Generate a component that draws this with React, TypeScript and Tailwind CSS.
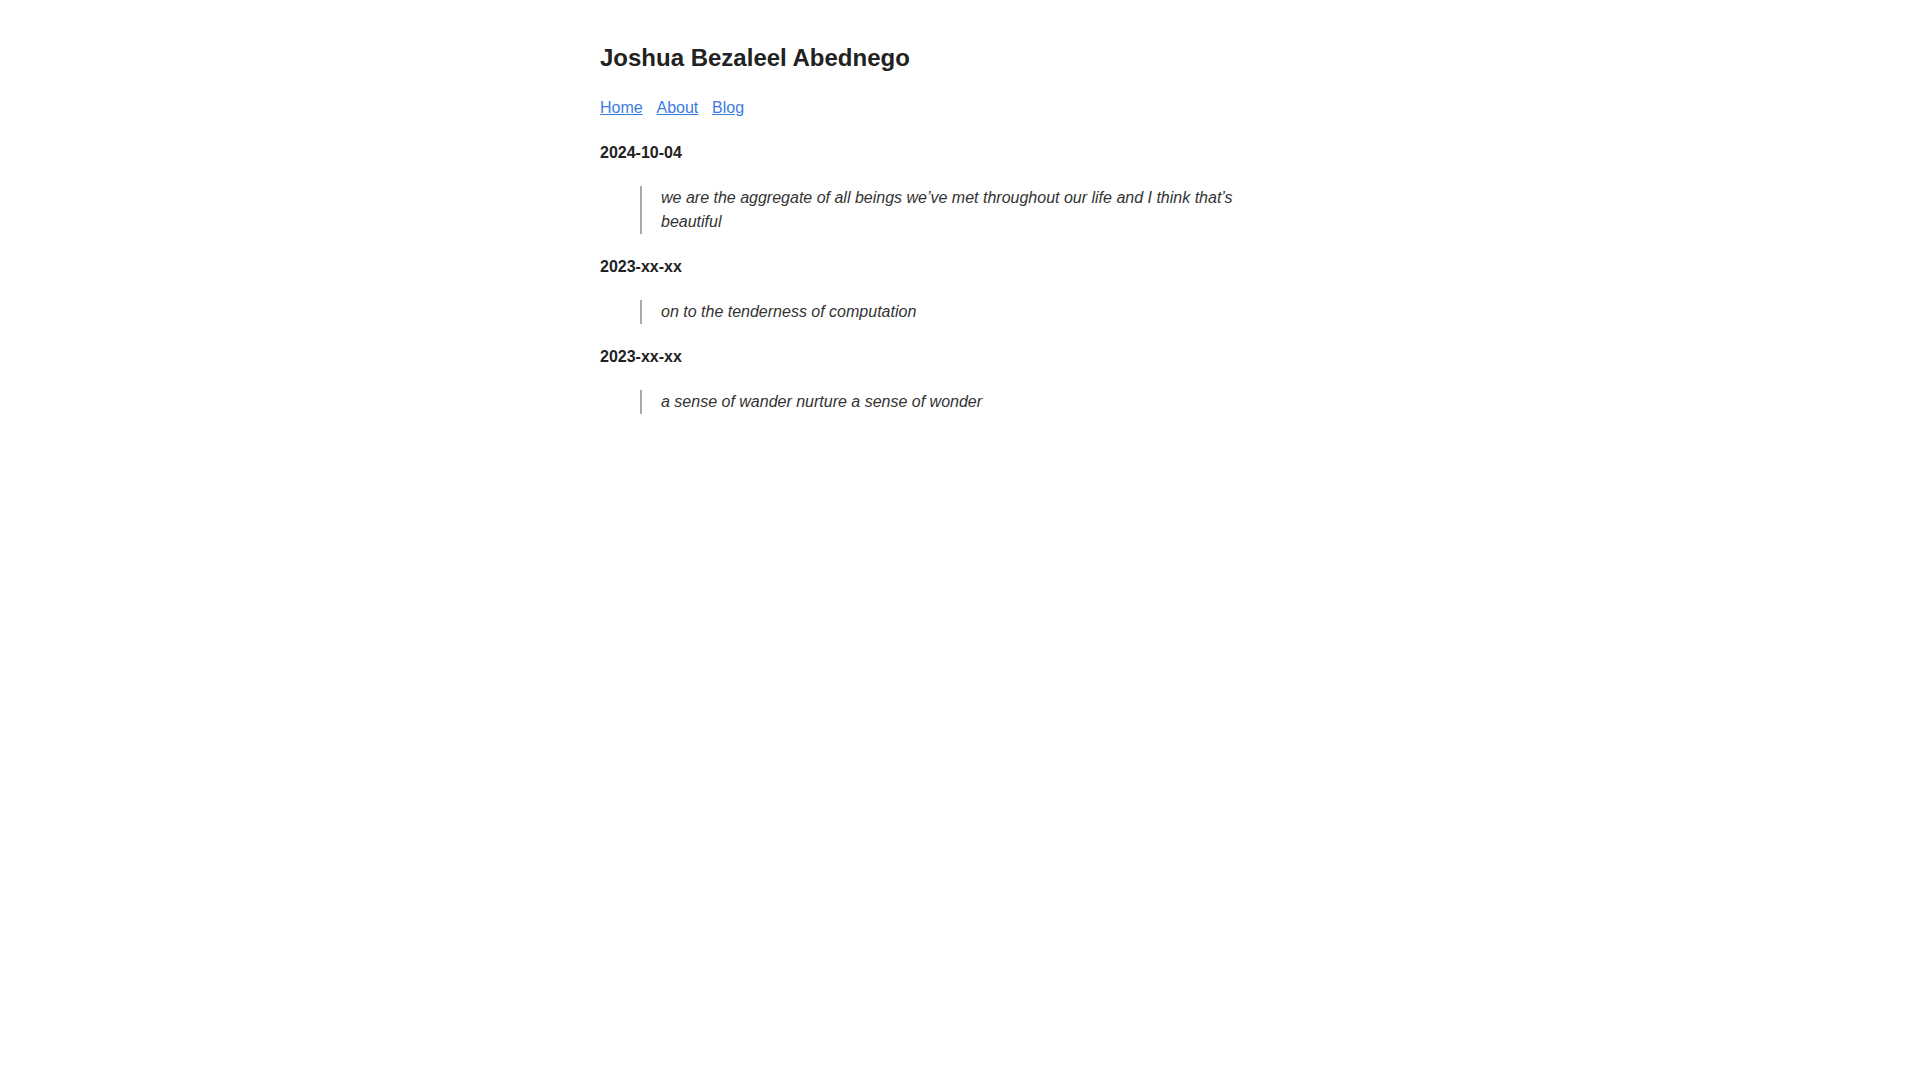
export default function App() {
  const entries = [
    {
      date: "2024-10-04",
      quote:
        "we are the aggregate of all beings we\u2019ve met throughout our life and I think that\u2019s beautiful",
    },
    { date: "2023-xx-xx", quote: "on to the tenderness of computation" },
    { date: "2023-xx-xx", quote: "a sense of wander nurture a sense of wonder" },
  ];
  return (
    <div
      className="min-h-screen bg-white text-[#222222] text-[16px] leading-[1.5]"
      style={{ fontFamily: '"Liberation Sans", Arial, sans-serif' }}
    >
      <div className="mx-auto w-[720px] pt-[40px] flex flex-col">
        <h1 className="text-[24px] font-bold leading-[1.5]">Joshua Bezaleel Abednego</h1>
        <nav className="flex gap-[13.8px] mt-[19.5px]">
          <a href="#" className="text-[#3b7ddd] underline">Home</a>
          <a href="#" className="text-[#3b7ddd] underline">About</a>
          <a href="#" className="text-[#3b7ddd] underline">Blog</a>
        </nav>
        <div className="flex flex-col gap-[21.3px] mt-[21px]">
          {entries.map((e, i) => (
            <div key={i} className="flex flex-col gap-[21px]">
              <div className="font-bold">{e.date}</div>
              <blockquote className="ml-[40px] border-l-[2px] border-[#aaaaaa] pl-[19px] italic text-[#333333] pr-[60px]">
                {e.quote}
              </blockquote>
            </div>
          ))}
        </div>
      </div>
    </div>
  );
}
